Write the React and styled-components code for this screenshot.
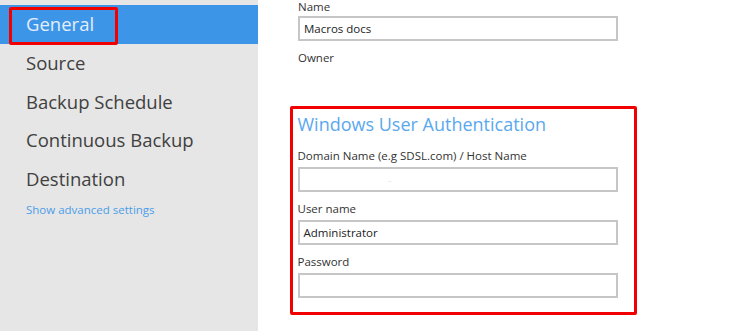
import React from "react"
import styled, {createGlobalStyle} from "styled-components"

const GlobalStyle = createGlobalStyle`
    *{
        margin: 0;
        padding: 0;
        box-sizing: border-box;
    }
    body{
        background: #ffffff;
        font-family: "Open Sans", "Noto Sans", sans-serif;
        overflow: hidden;
    }
`;

const Page = styled.div`
    display: flex;
    width: 730px;
    height: 331px;
`;

const Sidebar = styled.nav`
    width: 258px;
    flex-shrink: 0;
    background: #e6e6e6;
    padding-top: 5px;
    display: flex;
    flex-direction: column;
`;

const NavItem = styled.div`
    height: 38.5px;
    display: flex;
    align-items: center;
    padding-left: 26px;
    font-size: 18.5px;
    color: ${p => p.active ? "#e3eefb" : "#404040"};
    background: ${p => p.active ? "#3d95e8" : "transparent"};
`;

const Marked = styled.span`
    position: relative;
    display: inline-block;
    height: 38px;
    line-height: 38px;

    &::after{
        content: "";
        position: absolute;
        left: -17px;
        right: -24px;
        top: 2px;
        bottom: -2px;
        border: 3.5px solid #f20000;
        border-radius: 2px;
    }
`;

const Advanced = styled.a`
    padding-left: 26px;
    margin-top: 4px;
    font-size: 11.5px;
    color: #4a9ee8;
    text-decoration: none;
`;

const Main = styled.main`
    flex: 1;
    padding-left: 40px;
`;

const Label = styled.div`
    font-size: 11.5px;
    line-height: 16px;
    color: #333333;
    margin-top: ${p => p.top || 0}px;
`;

const Input = styled.div`
    width: 320px;
    height: 25px;
    border: 2px solid #c6c6c6;
    background: #ffffff;
    font-size: 11.5px;
    line-height: 21px;
    padding-left: 4px;
    color: #222222;
    margin-top: ${p => p.top ?? 3}px;
`;

const Faint = styled.span`
    margin-left: 84px;
    color: #d0d0d0;
    font-size: 8px;
`;

const AuthBox = styled.section`
    width: 347px;
    margin-left: -8px;
    margin-top: 40px;
    border: 3.5px solid #f20000;
    border-radius: 2px;
    padding: 3px 4.5px 14px;
`;

const Heading = styled.h2`
    font-size: 18px;
    font-weight: 400;
    color: #5aa8ee;
    line-height: 24px;
    margin-bottom: 12px;
`;

export default function App(){
    return(
        <>
            <GlobalStyle />
            <Page>
                <Sidebar>
                    <NavItem active><Marked>General</Marked></NavItem>
                    <NavItem>Source</NavItem>
                    <NavItem>Backup Schedule</NavItem>
                    <NavItem>Continuous Backup</NavItem>
                    <NavItem>Destination</NavItem>
                    <Advanced href="#">Show advanced settings</Advanced>
                </Sidebar>
                <Main>
                    <Label top={-1}>Name</Label>
                    <Input top={1}>Macros docs</Input>
                    <Label top={9}>Owner</Label>
                    <AuthBox>
                        <Heading>Windows User Authentication</Heading>
                        <Label>Domain Name (e.g SDSL.com) / Host Name</Label>
                        <Input><Faint>··</Faint></Input>
                        <Label top={9}>User name</Label>
                        <Input>Administrator</Input>
                        <Label top={9}>Password</Label>
                        <Input />
                    </AuthBox>
                </Main>
            </Page>
        </>
    )
}
